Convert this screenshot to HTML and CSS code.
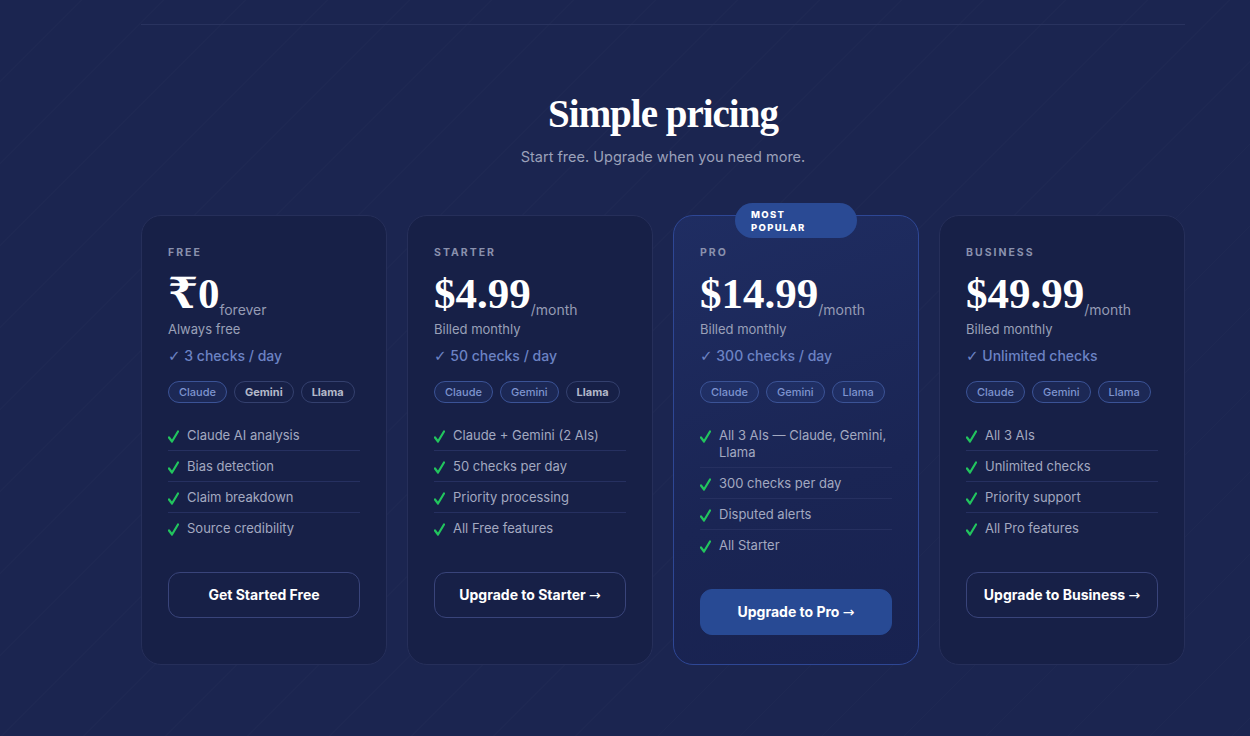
FILE: index.html
```html
<!DOCTYPE html>
<html>
<head>
    <meta charset="utf-8">
    <link rel="stylesheet" href="styles.css">
</head>
<body>
    <div class="wrap">
        <div class="rule"></div>

        <div class="head">
            <h2>Simple pricing</h2>
            <p>Start free. Upgrade when you need more.</p>
        </div>

        <div class="plans">
            <div class="plan">
                <div class="tier">FREE</div>
                <div class="price"><span class="amount">₹0</span><span class="per">forever</span></div>
                <div class="billed">Always free</div>
                <div class="quota"><span class="mark">✓</span> 3 checks / day</div>
                <div class="pills">
                    <span class="pill on">Claude</span>
                    <span class="pill">Gemini</span>
                    <span class="pill">Llama</span>
                </div>
                <ul class="features">
                    <li><svg class="tick" viewBox="0 0 11 13"><path d="M1 7.5 L4 11.5 L10 1.5"/></svg>Claude AI analysis</li>
                    <li><svg class="tick" viewBox="0 0 11 13"><path d="M1 7.5 L4 11.5 L10 1.5"/></svg>Bias detection</li>
                    <li><svg class="tick" viewBox="0 0 11 13"><path d="M1 7.5 L4 11.5 L10 1.5"/></svg>Claim breakdown</li>
                    <li><svg class="tick" viewBox="0 0 11 13"><path d="M1 7.5 L4 11.5 L10 1.5"/></svg>Source credibility</li>
                </ul>
                <a class="btn">Get Started Free</a>
            </div>

            <div class="plan">
                <div class="tier">STARTER</div>
                <div class="price"><span class="amount">$4.99</span><span class="per">/month</span></div>
                <div class="billed">Billed monthly</div>
                <div class="quota"><span class="mark">✓</span> 50 checks / day</div>
                <div class="pills">
                    <span class="pill on">Claude</span>
                    <span class="pill on">Gemini</span>
                    <span class="pill">Llama</span>
                </div>
                <ul class="features">
                    <li><svg class="tick" viewBox="0 0 11 13"><path d="M1 7.5 L4 11.5 L10 1.5"/></svg>Claude + Gemini (2 AIs)</li>
                    <li><svg class="tick" viewBox="0 0 11 13"><path d="M1 7.5 L4 11.5 L10 1.5"/></svg>50 checks per day</li>
                    <li><svg class="tick" viewBox="0 0 11 13"><path d="M1 7.5 L4 11.5 L10 1.5"/></svg>Priority processing</li>
                    <li><svg class="tick" viewBox="0 0 11 13"><path d="M1 7.5 L4 11.5 L10 1.5"/></svg>All Free features</li>
                </ul>
                <a class="btn">Upgrade to Starter <span class="arrow">→</span></a>
            </div>

            <div class="plan popular">
                <div class="badge">MOST<br>POPULAR</div>
                <div class="tier">PRO</div>
                <div class="price"><span class="amount">$14.99</span><span class="per">/month</span></div>
                <div class="billed">Billed monthly</div>
                <div class="quota"><span class="mark">✓</span> 300 checks / day</div>
                <div class="pills">
                    <span class="pill on">Claude</span>
                    <span class="pill on">Gemini</span>
                    <span class="pill on">Llama</span>
                </div>
                <ul class="features">
                    <li><svg class="tick" viewBox="0 0 11 13"><path d="M1 7.5 L4 11.5 L10 1.5"/></svg>All 3 AIs — Claude, Gemini, Llama</li>
                    <li><svg class="tick" viewBox="0 0 11 13"><path d="M1 7.5 L4 11.5 L10 1.5"/></svg>300 checks per day</li>
                    <li><svg class="tick" viewBox="0 0 11 13"><path d="M1 7.5 L4 11.5 L10 1.5"/></svg>Disputed alerts</li>
                    <li><svg class="tick" viewBox="0 0 11 13"><path d="M1 7.5 L4 11.5 L10 1.5"/></svg>All Starter</li>
                </ul>
                <a class="btn primary">Upgrade to Pro <span class="arrow">→</span></a>
            </div>

            <div class="plan">
                <div class="tier">BUSINESS</div>
                <div class="price"><span class="amount">$49.99</span><span class="per">/month</span></div>
                <div class="billed">Billed monthly</div>
                <div class="quota"><span class="mark">✓</span> Unlimited checks</div>
                <div class="pills">
                    <span class="pill on">Claude</span>
                    <span class="pill on">Gemini</span>
                    <span class="pill on">Llama</span>
                </div>
                <ul class="features">
                    <li><svg class="tick" viewBox="0 0 11 13"><path d="M1 7.5 L4 11.5 L10 1.5"/></svg>All 3 AIs</li>
                    <li><svg class="tick" viewBox="0 0 11 13"><path d="M1 7.5 L4 11.5 L10 1.5"/></svg>Unlimited checks</li>
                    <li><svg class="tick" viewBox="0 0 11 13"><path d="M1 7.5 L4 11.5 L10 1.5"/></svg>Priority support</li>
                    <li><svg class="tick" viewBox="0 0 11 13"><path d="M1 7.5 L4 11.5 L10 1.5"/></svg>All Pro features</li>
                </ul>
                <a class="btn">Upgrade to Business <span class="arrow">→</span></a>
            </div>
        </div>
    </div>
</body>
</html>
```

FILE: styles.css
```css
html,
body {
    margin: 0;
    height: 100%;
}

body {
    background-color: #1b2550;
    background-image: repeating-linear-gradient(135deg, transparent 0 57px, rgba(255, 255, 255, 0.012) 57px 58px);
    font-family: Inter, "Noto Sans", sans-serif;
    color: #a3a9c0;
}

.wrap {
    width: 1044px;
    margin-left: 141px;
    padding-top: 24px;
}

.rule {
    height: 1px;
    background: #29335f;
}

.head {
    text-align: center;
    margin-top: 66px;
}

.head h2 {
    margin: 0;
    font-family: "Liberation Serif", serif;
    font-weight: 700;
    font-size: 39px;
    line-height: 46px;
    letter-spacing: -1px;
    color: #ffffff;
}

.head p {
    margin: 10px 0 0;
    font-size: 14.5px;
    line-height: 20px;
    color: #9ba1ba;
}

.plans {
    display: grid;
    grid-template-columns: repeat(4, 1fr);
    gap: 20px;
    margin-top: 48px;
}

.plan {
    position: relative;
    background: #172047;
    border: 1px solid #262f5a;
    border-radius: 20px;
    padding: 30px 26px 29px;
}

.plan.popular {
    background: linear-gradient(160deg, #1f2d62 0%, #1a2554 60%, #182250 100%);
    border-color: #2e4795;
}

.badge {
    position: absolute;
    top: -13px;
    left: 50%;
    transform: translateX(-50%);
    width: 90px;
    padding: 5px 16px 4px;
    background: #2a4a94;
    border-radius: 18px;
    color: #ffffff;
    font-size: 9.5px;
    font-weight: 800;
    letter-spacing: 1.3px;
    line-height: 13px;
}

.tier {
    font-size: 10.5px;
    line-height: 14px;
    font-weight: 700;
    letter-spacing: 2px;
    color: #8a91ad;
}

.price {
    display: flex;
    align-items: flex-end;
    margin-top: 15px;
}

.amount {
    font-family: "Liberation Serif", "DejaVu Serif", serif;
    font-weight: 700;
    font-size: 43px;
    line-height: 38px;
    color: #ffffff;
}

.per {
    font-size: 14px;
    line-height: 18px;
    margin-bottom: -6px;
    color: #959bb4;
}

.billed {
    margin-top: 7px;
    font-size: 13px;
    line-height: 18px;
    color: #9aa0b8;
}

.quota {
    margin-top: 8px;
    font-size: 14px;
    line-height: 20px;
    font-weight: 500;
    color: #6c83c4;
}

.mark {
    font-family: "DejaVu Sans", sans-serif;
    font-size: 15px;
}

.pills {
    display: flex;
    gap: 7px;
    margin-top: 15px;
}

.pill {
    height: 20px;
    line-height: 20px;
    padding: 0 10px;
    border: 1px solid #34406e;
    border-radius: 11px;
    font-size: 11px;
    font-weight: 700;
    color: #b3b8c9;
}

.pill.on {
    border-color: #3b5396;
    background: rgba(58, 85, 160, 0.16);
    font-weight: 500;
    color: #7e94cf;
}

.features {
    list-style: none;
    margin: 17px 0 0;
    padding: 0;
}

.features li {
    display: flex;
    gap: 8px;
    padding: 7px 0 6px;
    font-size: 13px;
    line-height: 17px;
    color: #a3a9c0;
    border-bottom: 1px solid #263060;
}

.features li:last-child {
    border-bottom: none;
}

.tick {
    flex: 0 0 11px;
    width: 11px;
    height: 13px;
    margin-top: 3px;
    fill: none;
    stroke: #22c55e;
    stroke-width: 2.2;
    stroke-linecap: round;
    stroke-linejoin: round;
}

.btn {
    display: block;
    margin-top: 29px;
    height: 44px;
    line-height: 44px;
    border: 1px solid #39447a;
    border-radius: 12px;
    text-align: center;
    font-size: 14px;
    font-weight: 700;
    color: #ffffff;
}

.btn.primary {
    background: #284a94;
    border-color: #284a94;
}

.arrow {
    font-family: "DejaVu Sans", sans-serif;
    font-weight: 400;
}
```
